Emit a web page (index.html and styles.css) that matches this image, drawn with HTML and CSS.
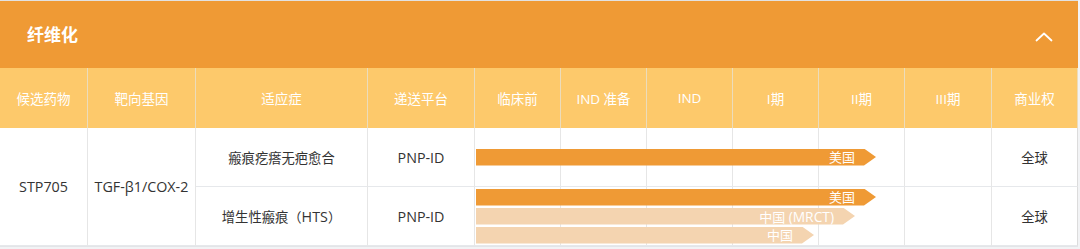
FILE: index.html
```html
<!DOCTYPE html>
<html lang="zh-CN">
<head>
<meta charset="utf-8">
<title>纤维化</title>
<link rel="stylesheet" href="styles.css">
</head>
<body>
<section class="panel">
  <header class="panel-head">
    <h2 class="panel-title">纤维化</h2>
    <svg class="chevron" width="18" height="11" viewBox="0 0 18 11" aria-hidden="true">
      <polyline points="1.5,9.5 9,2.5 16.5,9.5" fill="none" stroke="#fff" stroke-width="1.8" stroke-linecap="round" stroke-linejoin="round"/>
    </svg>
  </header>
  <div class="grid">
    <div class="th">候选药物</div>
    <div class="th">靶向基因</div>
    <div class="th">适应症</div>
    <div class="th">递送平台</div>
    <div class="th">临床前</div>
    <div class="th">IND 准备</div>
    <div class="th">IND</div>
    <div class="th">I期</div>
    <div class="th">II期</div>
    <div class="th">III期</div>
    <div class="th">商业权</div>

    <div class="td span-rows c1 lat">STP705</div>
    <div class="td span-rows c2 lat">TGF-β1/COX-2</div>

    <div class="td c3 r1">瘢痕疙瘩无疤愈合</div>
    <div class="td c4 r1 lat">PNP-ID</div>
    <div class="td stages c5 r1">
      <div class="bar bar-dark" style="width:400px">美国</div>
    </div>
    <div class="td c11 r1">全球</div>

    <div class="td c3 r2">增生性瘢痕（<span class="lat">HTS</span>）</div>
    <div class="td c4 r2 lat">PNP-ID</div>
    <div class="td stages c5 r2">
      <div class="bar bar-dark" style="width:400px">美国</div>
      <div class="bar bar-light" style="width:379px">中国 <span class="lat-sm">(MRCT)</span></div>
      <div class="bar bar-light" style="width:338px">中国</div>
    </div>
    <div class="td c11 r2">全球</div>
  </div>
</section>
</body>
</html>
```
FILE: styles.css
```css
* { box-sizing: border-box; }

html, body {
  margin: 0;
  padding: 0;
}

body {
  background: #f2f3f5;
  font-family: "Open Sans", "Noto Sans CJK SC", sans-serif;
  color: #333;
}

.panel {
  width: 1078px;
  background: #fff;
  border-top: 1px solid #e2e2e2;
  border-bottom: 1px solid #e3e5e8;
}

.panel-head {
  height: 67px;
  background: #ef9a35;
  display: flex;
  align-items: center;
  justify-content: space-between;
  padding: 0 25px 0 27px;
}

.panel-title {
  margin: 0;
  font-size: 17px;
  font-weight: 700;
  color: #fff;
  line-height: 1;
}

.chevron {
  display: block;
  margin-top: 4px;
}

.grid {
  display: grid;
  grid-template-columns: 88px 108px 172px 107px 86px 86px 86px 86px 86px 87px 86px;
  grid-template-rows: 60px 59px 59px;
}

.th {
  background: #fdc96b;
  color: #fff;
  font-size: 13.5px;
  display: flex;
  align-items: center;
  justify-content: center;
  border-right: 1px solid #ecdcbb;
  white-space: nowrap;
}

.th:last-child { border-right-color: #e2e2e2; }

.td {
  font-size: 13.3px;
  color: #333;
  display: flex;
  align-items: center;
  justify-content: center;
  border-right: 1px solid #e6e6e6;
  border-bottom: 1px solid #e6e8eb;
  white-space: nowrap;
}

.lat { font-size: 14.3px; }
.lat-sm { font-size: 13.8px; }

.span-rows { grid-row: 2 / span 2; }
.c1 { grid-column: 1; }
.c2 { grid-column: 2; }
.c3 { grid-column: 3; }
.c4 { grid-column: 4; }
.c5 { grid-column: 5 / span 6; }
.c11 { grid-column: 11; border-right-color: #dcdcdc; }
.r1 { grid-row: 2; }
.r2 { grid-row: 3; }

.stages {
  flex-direction: column;
  align-items: flex-start;
  justify-content: center;
  gap: 2px;
  padding-left: 1px;
  background-image: repeating-linear-gradient(to right, transparent 0 85px, #e6e6e6 85px 86px);
  background-size: 430px 100%;
  background-repeat: no-repeat;
}

.bar {
  height: 17px;
  line-height: 17px;
  font-size: 13px;
  color: #fff;
  text-align: right;
  padding-right: 21px;
  white-space: nowrap;
  clip-path: polygon(0 0, calc(100% - 12px) 0, 100% 50%, calc(100% - 12px) 100%, 0 100%);
}

.bar-dark { background: #ef9a35; }
.bar-light { background: #f4d4b0; }
```
